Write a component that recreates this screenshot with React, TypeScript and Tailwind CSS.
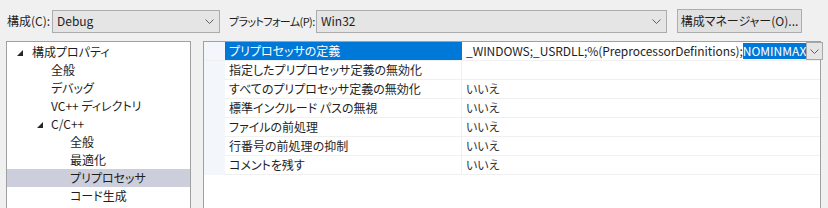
import React from "react";

const Chevron = ({ className = "" }: { className?: string }) => (
  <svg width="9" height="5" viewBox="0 0 9 5" className={className}>
    <polyline points="0.5,0.5 4.5,4.5 8.5,0.5" fill="none" stroke="#606060" strokeWidth="1" />
  </svg>
);

const Tri = () => (
  <svg width="6" height="6" viewBox="0 0 6 6">
    <polygon points="6,0 6,6 0,6" fill="#262626" />
  </svg>
);

const treeItems: { label: string; indent: number; tri?: boolean; selected?: boolean }[] = [
  { label: "構成プロパティ", indent: 0, tri: true },
  { label: "全般", indent: 1 },
  { label: "デバッグ", indent: 1 },
  { label: "VC++ ディレクトリ", indent: 1 },
  { label: "C/C++", indent: 1, tri: true },
  { label: "全般", indent: 2 },
  { label: "最適化", indent: 2 },
  { label: "プリプロセッサ", indent: 2, selected: true },
  { label: "コード生成", indent: 2 },
];

const rows: { name: string; value: string }[] = [
  { name: "指定したプリプロセッサ定義の無効化", value: "" },
  { name: "すべてのプリプロセッサ定義の無効化", value: "いいえ" },
  { name: "標準インクルード パスの無視", value: "いいえ" },
  { name: "ファイルの前処理", value: "いいえ" },
  { name: "行番号の前処理の抑制", value: "いいえ" },
  { name: "コメントを残す", value: "いいえ" },
];

export default function App() {
  return (
    <div
      className="w-[828px] h-[208px] overflow-hidden bg-[#f0f0f0] text-[12px] leading-[18px] text-[#1e1e1e] [font-feature-settings:'palt']"
      style={{ fontFamily: '"Noto Sans CJK JP", "Noto Sans", sans-serif' }}
    >
      {/* top bar */}
      <div className="flex items-center h-[41px] pt-[1px]">
        <span className="w-[52px] pl-[7px] shrink-0 whitespace-nowrap">構成(C):</span>
        <div className="w-[168px] h-[23px] shrink-0 border border-[#acacac] bg-[#e5e5e5] flex items-center justify-between pl-[4px] pr-[5px]">
          <span>Debug</span>
          <Chevron />
        </div>
        <span className="w-[96px] pl-[9px] shrink-0 whitespace-nowrap text-[11px] tracking-[-0.6px]">プラットフォーム(P):</span>
        <div className="w-[351px] h-[23px] shrink-0 border border-[#acacac] bg-[#e5e5e5] flex items-center justify-between pl-[4px] pr-[5px]">
          <span>Win32</span>
          <Chevron />
        </div>
        <div className="ml-[10px] w-[125px] h-[24px] shrink-0 border border-[#adadad] bg-[#e1e1e1] flex items-center justify-center whitespace-nowrap">
          構成マネージャー(O)...
        </div>
      </div>

      {/* main */}
      <div className="flex">
        {/* tree */}
        <div className="ml-[6px] w-[185px] h-[200px] shrink-0 border border-[#a0a0a0] bg-white pt-[1px]">
          {treeItems.map((t, i) => (
            <div
              key={i}
              className={`h-[18px] flex items-center ${t.selected ? "bg-[#cccedb]" : ""}`}
            >
              <div
                className={
                  t.indent === 0 ? "w-[25px] shrink-0" : t.indent === 1 ? "w-[44px] shrink-0" : "w-[63px] shrink-0"
                }
              >
                {t.tri && (
                  <div className={t.indent === 0 ? "pl-[10px] pt-[1px]" : "pl-[30px] pt-[1px]"}>
                    <Tri />
                  </div>
                )}
              </div>
              <span className="whitespace-nowrap">{t.label}</span>
            </div>
          ))}
        </div>

        {/* property grid */}
        <div className="ml-[12px] w-[618px] h-[200px] shrink-0 border border-[#a0a0a0] bg-white">
          {/* first row */}
          <div className="flex h-[19px] border-b border-[#f0f0f0]">
            <div className="w-[21px] shrink-0 bg-[#f3f6fb]" />
            <div className="w-[237px] shrink-0 bg-[#0078d7] text-white pl-[4px] flex items-center whitespace-nowrap">
              プリプロセッサの定義
            </div>
            <div className="flex-1 flex items-center pl-[4px] min-w-0">
              <span className="whitespace-nowrap tracking-[-0.05px]">_WINDOWS;_USRDLL;%(PreprocessorDefinitions);</span>
              <span className="whitespace-nowrap bg-[#0078d7] text-white leading-[16px]">NOMINMAX</span>
              <div className="flex-1" />
              <div className="w-[17px] h-[18px] shrink-0 border border-[#a8a8a8] bg-[#e5e5e5] flex items-center justify-center">
                <Chevron />
              </div>
            </div>
          </div>
          {rows.map((r, i) => (
            <div key={i} className="flex h-[19px]">
              <div className="w-[21px] shrink-0 bg-[#f3f6fb]" />
              <div className="w-[237px] shrink-0 border-b border-r border-[#f0f0f0] pl-[4px] flex items-center whitespace-nowrap">
                {r.name}
              </div>
              <div className="flex-1 border-b border-[#f0f0f0] pl-[4px] flex items-center text-[#333]">
                {r.value}
              </div>
            </div>
          ))}
        </div>
      </div>
    </div>
  );
}
